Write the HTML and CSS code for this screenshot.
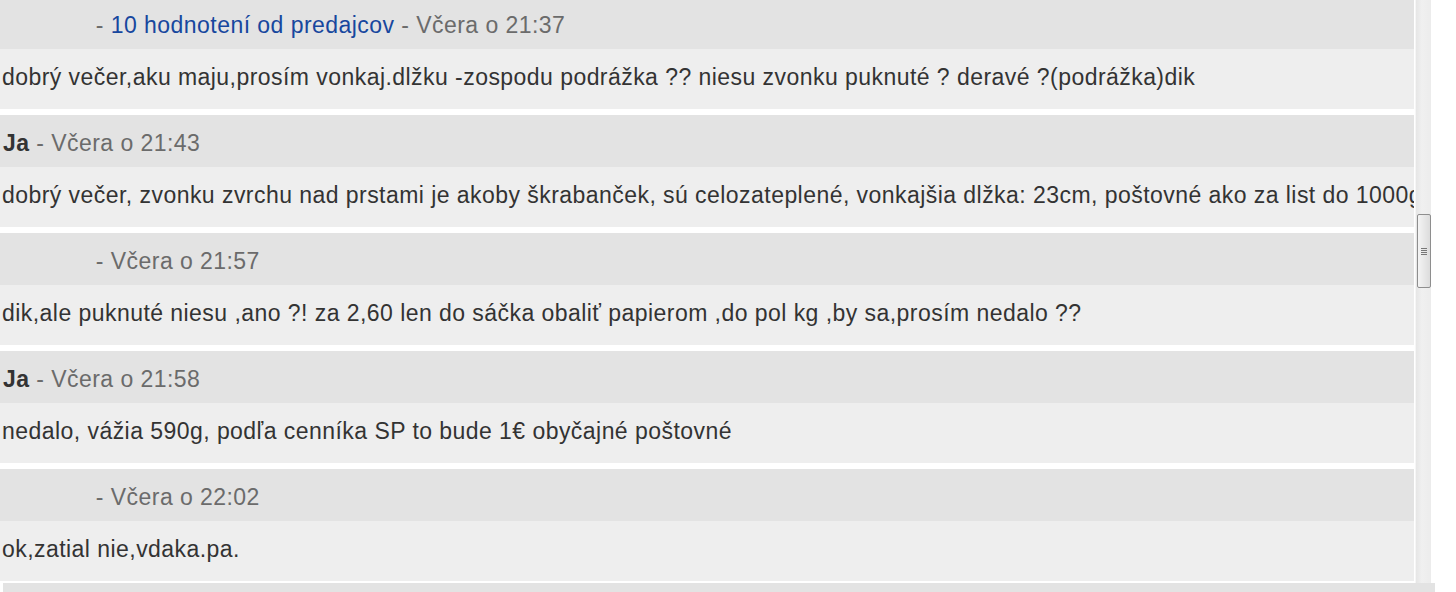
FILE: index.html
```html
<!DOCTYPE html>
<html lang="sk">
<head>
<meta charset="utf-8">
<title>Správy</title>
<link rel="stylesheet" href="styles.css">
</head>
<body>
<div class="frame">
  <div class="thread">
    <div class="msg first">
      <div class="head"><span class="name hidden"></span> - <a class="rating" href="#">10 hodnotení od predajcov</a> - Včera o 21:37</div>
      <div class="body">dobrý večer,aku maju,prosím vonkaj.dlžku -zospodu podrážka ?? niesu zvonku puknuté ? deravé ?(podrážka)dik</div>
    </div>
    <div class="msg">
      <div class="head"><span class="name">Ja</span> - Včera o 21:43</div>
      <div class="body">dobrý večer, zvonku zvrchu nad prstami je akoby škrabanček, sú celozateplené, vonkajšia dlžka: 23cm, poštovné ako za list do 1000g</div>
    </div>
    <div class="msg">
      <div class="head"><span class="name hidden"></span> - Včera o 21:57</div>
      <div class="body">dik,ale puknuté niesu ,ano ?! za 2,60 len do sáčka obaliť papierom ,do pol kg ,by sa,prosím nedalo ??</div>
    </div>
    <div class="msg">
      <div class="head"><span class="name">Ja</span> - Včera o 21:58</div>
      <div class="body">nedalo, vážia 590g, podľa cenníka SP to bude 1€ obyčajné poštovné</div>
    </div>
    <div class="msg last">
      <div class="head"><span class="name hidden"></span> - Včera o 22:02</div>
      <div class="body">ok,zatial nie,vdaka.pa.</div>
    </div>
  </div>
  <div class="scrollbar"><div class="thumb"><span class="grip"></span></div></div>
</div>
<div class="bottombar"></div>
</body>
</html>
```

FILE: styles.css
```css
html, body {
  margin: 0;
  padding: 0;
  background: #ffffff;
  overflow: hidden;
}
body {
  font-family: "Liberation Sans", Arial, sans-serif;
  font-size: 23px;
  letter-spacing: 0.45px;
  color: #333333;
  width: 1456px;
  height: 592px;
}
.frame {
  display: flex;
  height: 583px;
  overflow: hidden;
}
.thread {
  width: 1414px;
  flex: none;
  display: flex;
  flex-direction: column;
  gap: 6px;
  margin-top: -3px;
}
.msg {
  flex: none;
}
.head {
  height: 48px;
  padding-top: 4px;
  line-height: 48px;
  background: #e3e3e3;
  color: #6b6b6b;
  padding-left: 3px;
  white-space: nowrap;
  overflow: hidden;
}
.name {
  font-weight: bold;
  color: #333333;
}
.name.hidden {
  display: inline-block;
  width: 86px;
}
.rating {
  color: #17479e;
  text-decoration: none;
}
.body {
  height: 60px;
  line-height: 56px;
  background: #eeeeee;
  padding-left: 2px;
  white-space: nowrap;
  overflow: hidden;
}
.scrollbar {
  width: 15px;
  margin-left: 1px;
  flex: none;
  background: linear-gradient(to right, #e6e6e6, #f0f0f0 40%, #ececec);
  border-left: 1px solid #f6f6f6;
  position: relative;
}
.thumb {
  position: absolute;
  top: 214px;
  left: 1px;
  width: 12px;
  height: 72px;
  border: 1px solid #8e8e8e;
  border-radius: 2px;
  background: linear-gradient(to right, #f4f4f4, #dcdcdc);
  display: flex;
  align-items: center;
  justify-content: center;
}
.grip {
  width: 6px;
  height: 7px;
  background: repeating-linear-gradient(to bottom, #777 0 1px, transparent 1px 2px);
}
.bottombar {
  margin-left: 3px;
  width: 1432px;
  height: 9px;
  background: #e3e3e3;
}
```
